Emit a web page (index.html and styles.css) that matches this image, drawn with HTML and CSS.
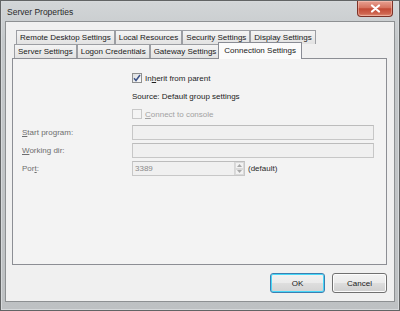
FILE: index.html
```html
<!DOCTYPE html>
<html>
<head>
<meta charset="utf-8">
<title>Server Properties</title>
<link rel="stylesheet" href="styles.css">
</head>
<body>
<div class="window">
  <div class="titlebar">
    <span class="title">Server Properties</span>
    <div class="close">
      <svg width="11" height="9" viewBox="0 0 11 9"><path d="M2 1.5 L9 7.5 M9 1.5 L2 7.5" stroke="#ffffff" stroke-width="2.2" stroke-linecap="round"/></svg>
    </div>
  </div>
  <div class="client">
    <div class="tabs">
      <div class="tabrow row-back">
        <div class="tab">Remote Desktop Settings</div>
        <div class="tab">Local Resources</div>
        <div class="tab">Security Settings</div>
        <div class="tab">Display Settings</div>
      </div>
      <div class="tabrow row-front">
        <div class="tab">Server Settings</div>
        <div class="tab">Logon Credentials</div>
        <div class="tab">Gateway Settings</div>
        <div class="tab active">Connection Settings</div>
      </div>
    </div>
    <div class="panel">
      <div class="row row-check1">
        <span class="label"></span>
        <span class="check checked">
          <svg width="8" height="8" viewBox="0 0 8 8"><path d="M1 4.2 L3 6.5 L7 1" fill="none" stroke="#3c5287" stroke-width="1.5"/></svg>
        </span>
        <span class="check-text">In<u>h</u>erit from parent</span>
      </div>
      <div class="row row-source">
        <span class="label"></span>
        <span class="source">Source: Default group settings</span>
      </div>
      <div class="row row-check2">
        <span class="label"></span>
        <span class="check disabled"></span>
        <span class="check-text dim"><u>C</u>onnect to console</span>
      </div>
      <div class="row row-field first">
        <span class="label"><u>S</u>tart program:</span>
        <span class="input wide"></span>
      </div>
      <div class="row row-field">
        <span class="label"><u>W</u>orking dir:</span>
        <span class="input wide"></span>
      </div>
      <div class="row row-field">
        <span class="label">Por<u>t</u>:</span>
        <span class="input port">
          <span class="port-value">3389</span>
          <span class="spin">
            <span class="spin-btn"><svg width="5" height="3" viewBox="0 0 5 3"><path d="M0 3 L2.5 0 L5 3 Z" fill="#a8a8a8"/></svg></span>
            <span class="spin-btn"><svg width="5" height="3" viewBox="0 0 5 3"><path d="M0 0 L2.5 3 L5 0 Z" fill="#a8a8a8"/></svg></span>
          </span>
        </span>
        <span class="default-note">(default)</span>
      </div>
    </div>
    <div class="buttons">
      <button class="btn default">OK</button>
      <button class="btn">Cancel</button>
    </div>
  </div>
</div>
</body>
</html>
```
FILE: styles.css
```css
* { box-sizing: border-box; }
html, body {
  margin: 0;
  padding: 0;
  width: 400px;
  height: 311px;
  overflow: hidden;
  background: #b9bcbe;
}
body {
  font-family: "Liberation Sans", Arial, sans-serif;
  font-size: 8px;
  color: #1e1e1e;
}
.window {
  width: 400px;
  height: 311px;
  border: 1px solid #626465;
  box-shadow: inset 0 0 0 1px #d6d9db;
  background: linear-gradient(#d3d6d8, #c4c8ca 40px, #bec1c3);
  padding: 0 4px 8px 4px;
  display: flex;
  flex-direction: column;
}
.titlebar {
  height: 20px;
  display: flex;
  align-items: flex-start;
  flex: none;
}
.title {
  font-size: 8.5px;
  color: #2a2a2a;
  margin: 6px 0 0 2px;
}
.close {
  margin-left: auto;
  margin-right: 2px;
  width: 36px;
  height: 16px;
  border: 1px solid #7d3227;
  border-top: none;
  border-radius: 0 0 4px 4px;
  background: linear-gradient(#e7a192 0%, #d6735f 45%, #c24a35 52%, #cf6650 85%, #e0957d 100%);
  box-shadow: inset 0 0 0 1px rgba(255, 210, 200, 0.45);
  display: flex;
  align-items: center;
  justify-content: center;
}
.client {
  flex: 1;
  background: #f0f0f0;
  border: 1px solid #8d9092;
  display: flex;
  flex-direction: column;
}
.tabs {
  margin-top: 8px;
  flex: none;
}
.tabrow {
  display: flex;
  height: 14px;
}
.row-back { margin-left: 10px; }
.row-front { margin-left: 8px; }
.tab {
  height: 14px;
  line-height: 13px;
  padding: 0 3px;
  border: 1px solid #9c9ea3;
  border-bottom: none;
  background: linear-gradient(#f4f4f4, #e2e2e2);
  color: #1a1a1a;
  white-space: nowrap;
}
.tab.active {
  position: relative;
  z-index: 2;
  height: 17px;
  margin: -2px -2px -1px -2px;
  padding: 1px 5px 0 5px;
  line-height: 13px;
  background: #fbfbfb;
  border-color: #898c95;
}
.panel {
  position: relative;
  z-index: 1;
  margin: 0 7px 0 6px;
  height: 207px;
  flex: none;
  border: 1px solid #8c8e94;
  background: #f3f3f3;
  padding: 14px 12px 0 9px;
  display: flex;
  flex-direction: column;
}
.row {
  display: flex;
  align-items: center;
}
.label {
  width: 110px;
  flex: none;
  color: #6e6e6e;
}
.row-check1 { height: 10px; }
.row-source { height: 10px; margin-top: 8px; }
.row-check2 { height: 10px; margin-top: 8px; }
.row-field { height: 15px; margin-top: 3px; }
.row-field.first { margin-top: 6px; }
.check {
  width: 10px;
  height: 10px;
  border: 1px solid #8e8f8f;
  background: linear-gradient(135deg, #dcdedf, #fbfbfb);
  display: flex;
  align-items: center;
  justify-content: center;
  flex: none;
}
.check.disabled {
  border-color: #c8c8c8;
  background: #f4f4f4;
}
.check-text {
  margin-left: 3px;
  color: #1e1e1e;
}
.check-text.dim { color: #a2a2a2; }
.source { color: #222; }
.input {
  height: 15px;
  border: 1px solid #c7c7c7;
  border-top-color: #bcbcbc;
  background: #f0f0f0;
  display: flex;
  align-items: center;
}
.input.wide { width: 242px; }
.input.port {
  width: 113px;
  justify-content: space-between;
}
.port-value {
  color: #8a8a8a;
  padding-left: 2px;
}
.spin {
  width: 10px;
  height: 13px;
  display: flex;
  flex-direction: column;
  border-left: 1px solid #d6d6d6;
}
.spin-btn {
  flex: 1;
  display: flex;
  align-items: center;
  justify-content: center;
  background: #f2f2f2;
  border: 1px solid #dadada;
}
.default-note {
  margin-left: 3px;
  color: #2a2a2a;
}
.buttons {
  margin-top: 8px;
  display: flex;
  justify-content: flex-end;
  gap: 7px;
  padding-right: 7px;
}
.btn {
  width: 55px;
  height: 20px;
  padding: 0;
  font-family: "Liberation Sans", Arial, sans-serif;
  font-size: 8px;
  color: #1a1a1a;
  border: 1px solid #707070;
  border-radius: 3px;
  background: linear-gradient(#f3f3f3 0%, #ebebeb 48%, #dddddd 52%, #cfcfcf 100%);
  box-shadow: inset 0 0 0 1px #fcfcfc;
}
.btn.default {
  border-color: #3c7fb1;
  box-shadow: inset 0 0 0 1px #48d7f8;
  background: linear-gradient(#eaf6fd 0%, #d9f0fc 48%, #bee6fd 52%, #a7d9f5 100%);
  background: linear-gradient(#f2f2f2 0%, #ebebeb 48%, #dedede 52%, #d3d3d3 100%);
}
```
